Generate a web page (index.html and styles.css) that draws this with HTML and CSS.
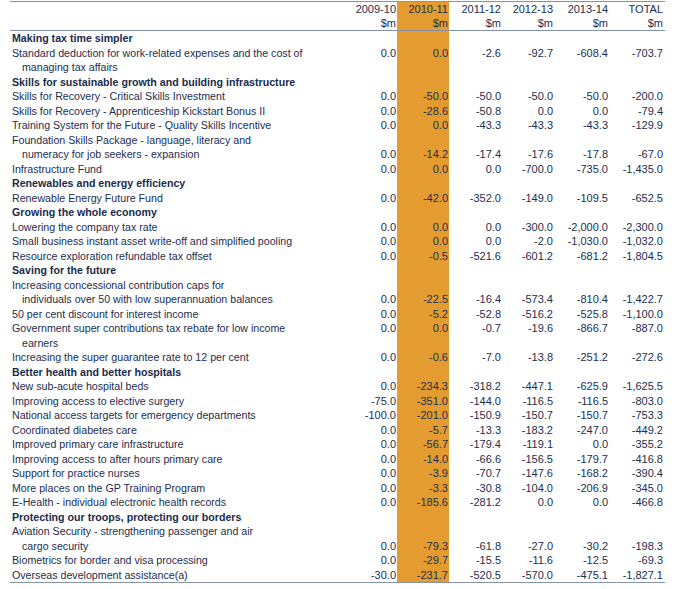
FILE: index.html
```html
<!DOCTYPE html>
<html lang="en">
<head>
    <meta charset="UTF-8">
    <title>Budget measures</title>
    <link rel="stylesheet" href="styles.css">
</head>
<body>

<table class="budget">
    <colgroup>
        <col class="c-label">
        <col class="c-52">
        <col class="c-52">
        <col class="c-53">
        <col class="c-52">
        <col class="c-55">
        <col class="c-56">
    </colgroup>
    <thead>
        <tr>
            <th class="label"></th>
            <th>2009-10</th>
            <th class="hl">2010-11</th>
            <th>2011-12</th>
            <th>2012-13</th>
            <th>2013-14</th>
            <th class="last">TOTAL</th>
        </tr>
        <tr class="units">
            <th class="label"></th>
            <th>$m</th>
            <th class="hl">$m</th>
            <th>$m</th>
            <th>$m</th>
            <th>$m</th>
            <th class="last">$m</th>
        </tr>
    </thead>
    <tbody id="rows"></tbody>
</table>

<script>
    // Each entry: [label, values, options]. Groups have no values.
    // top: the values sit on the first line of a two-line label
    const rows = [
        ["Making tax time simpler"],
        ["Standard deduction for work-related expenses and the cost of<br>managing tax affairs", ["0.0", "0.0", "-2.6", "-92.7", "-608.4", "-703.7"], "top"],
        ["Skills for sustainable growth and building infrastructure"],
        ["Skills for Recovery - Critical Skills Investment", ["0.0", "-50.0", "-50.0", "-50.0", "-50.0", "-200.0"]],
        ["Skills for Recovery - Apprenticeship Kickstart Bonus II", ["0.0", "-28.6", "-50.8", "0.0", "0.0", "-79.4"]],
        ["Training System for the Future - Quality Skills Incentive", ["0.0", "0.0", "-43.3", "-43.3", "-43.3", "-129.9"]],
        ["Foundation Skills Package - language, literacy and<br>numeracy for job seekers - expansion", ["0.0", "-14.2", "-17.4", "-17.6", "-17.8", "-67.0"]],
        ["Infrastructure Fund", ["0.0", "0.0", "0.0", "-700.0", "-735.0", "-1,435.0"]],
        ["Renewables and energy efficiency"],
        ["Renewable Energy Future Fund", ["0.0", "-42.0", "-352.0", "-149.0", "-109.5", "-652.5"]],
        ["Growing the whole economy"],
        ["Lowering the company tax rate", ["0.0", "0.0", "0.0", "-300.0", "-2,000.0", "-2,300.0"]],
        ["Small business instant asset write-off and simplified pooling", ["0.0", "0.0", "0.0", "-2.0", "-1,030.0", "-1,032.0"]],
        ["Resource exploration refundable tax offset", ["0.0", "-0.5", "-521.6", "-601.2", "-681.2", "-1,804.5"]],
        ["Saving for the future"],
        ["Increasing concessional contribution caps for<br>individuals over 50 with low superannuation balances", ["0.0", "-22.5", "-16.4", "-573.4", "-810.4", "-1,422.7"]],
        ["50 per cent discount for interest income", ["0.0", "-5.2", "-52.8", "-516.2", "-525.8", "-1,100.0"]],
        ["Government super contributions tax rebate for low income<br>earners", ["0.0", "0.0", "-0.7", "-19.6", "-866.7", "-887.0"], "top"],
        ["Increasing the super guarantee rate to 12 per cent", ["0.0", "-0.6", "-7.0", "-13.8", "-251.2", "-272.6"]],
        ["Better health and better hospitals"],
        ["New sub-acute hospital beds", ["0.0", "-234.3", "-318.2", "-447.1", "-625.9", "-1,625.5"]],
        ["Improving access to elective surgery", ["-75.0", "-351.0", "-144.0", "-116.5", "-116.5", "-803.0"]],
        ["National access targets for emergency departments", ["-100.0", "-201.0", "-150.9", "-150.7", "-150.7", "-753.3"]],
        ["Coordinated diabetes care", ["0.0", "-5.7", "-13.3", "-183.2", "-247.0", "-449.2"]],
        ["Improved primary care infrastructure", ["0.0", "-56.7", "-179.4", "-119.1", "0.0", "-355.2"]],
        ["Improving access to after hours primary care", ["0.0", "-14.0", "-66.6", "-156.5", "-179.7", "-416.8"]],
        ["Support for practice nurses", ["0.0", "-3.9", "-70.7", "-147.6", "-168.2", "-390.4"]],
        ["More places on the GP Training Program", ["0.0", "-3.3", "-30.8", "-104.0", "-206.9", "-345.0"]],
        ["E-Health - individual electronic health records", ["0.0", "-185.6", "-281.2", "0.0", "0.0", "-466.8"]],
        ["Protecting our troops, protecting our borders"],
        ["Aviation Security - strengthening passenger and air<br>cargo security", ["0.0", "-79.3", "-61.8", "-27.0", "-30.2", "-198.3"]],
        ["Biometrics for border and visa processing", ["0.0", "-29.7", "-15.5", "-11.6", "-12.5", "-69.3"]],
        ["Overseas development assistance(a)", ["-30.0", "-231.7", "-520.5", "-570.0", "-475.1", "-1,827.1"]]
    ];

    const body = document.getElementById("rows");
    rows.forEach(([label, values, opt]) => {
        const tr = document.createElement("tr");
        if (!values) tr.className = "group";
        if (opt === "top") tr.className = "top";

        let html = `<td class="label">${label}</td>`;
        const cells = values || ["", "", "", "", "", ""];
        cells.forEach((v, i) => {
            let cls = "";
            if (i === 1) cls = "hl";
            if (i === 5) cls = "last";
            html += `<td class="${cls}">${v}</td>`;
        });
        tr.innerHTML = html;
        body.appendChild(tr);
    });
</script>

</body>
</html>
```

FILE: styles.css
```css
body {
    margin: 0;
    background: #fff;
    font-family: "Liberation Sans", Arial, sans-serif;
    font-size: 11px;
    color: #1c2e50;
}
.budget {
    border-collapse: collapse;
    table-layout: fixed;
    width: 655px;
    margin: 1px 0 0 10px;
    border-top: 1px solid #8593a8;
    border-bottom: 1px solid #8593a8;
}
.c-label { width: 335px; }
.c-52 { width: 52px; }
.c-53 { width: 53px; }
.c-55 { width: 55px; }
.c-56 { width: 56px; }
.budget th,
.budget td {
    padding: 0 1px 0 0;
    line-height: 14.5px;
    text-align: right;
    font-weight: normal;
    vertical-align: bottom;
    white-space: nowrap;
}
.budget thead th {
    line-height: 14px;
}
.budget thead .units th {
    border-bottom: 1px solid #8593a8;
}
.budget .label {
    font-size: 10.65px;
    text-align: left;
    padding-left: 12px;
    text-indent: -10px;
}
.budget .last {
    padding-right: 2px;
}
.budget .hl {
    background: #e49c30;
}
.budget .group .label {
    font-weight: bold;
    color: #1a2b4a;
}
.budget .top td {
    vertical-align: top;
}
```
